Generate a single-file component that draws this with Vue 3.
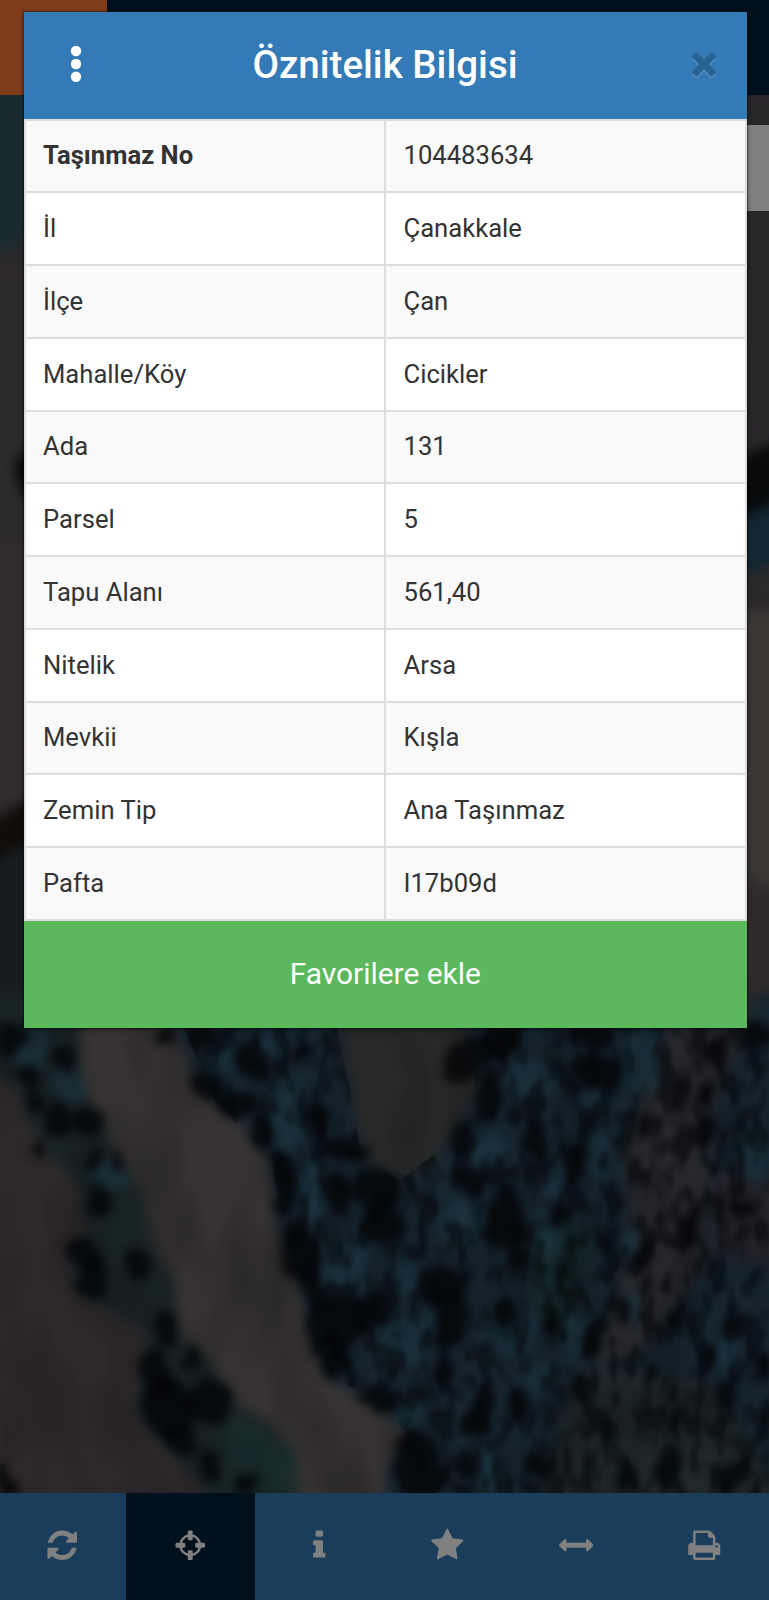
<script setup>
const rows = [
  ['Taşınmaz No', '104483634'],
  ['İl', 'Çanakkale'],
  ['İlçe', 'Çan'],
  ['Mahalle/Köy', 'Cicikler'],
  ['Ada', '131'],
  ['Parsel', '5'],
  ['Tapu Alanı', '561,40'],
  ['Nitelik', 'Arsa'],
  ['Mevkii', 'Kışla'],
  ['Zemin Tip', 'Ana Taşınmaz'],
  ['Pafta', 'I17b09d'],
]

const tools = [
  { name: 'refresh', path: 'M1639 1056q0 5-1 7-64 268-268 434.5t-478 166.5q-146 0-282.5-55t-243.5-157l-129 129q-19 19-45 19t-45-19-19-45v-448q0-26 19-45t45-19h448q26 0 45 19t19 45-19 45l-137 137q71 66 161 102t187 36q134 0 250-65t186-179q11-17 53-117 8-23 30-23h192q13 0 22.5 9.5t9.5 22.5zm25-800v448q0 26-19 45t-45 19h-448q-26 0-45-19t-19-45 19-45l138-138q-148-137-349-137-134 0-250 65t-186 179q-11 17-53 117-8 23-30 23h-199q-13 0-22.5-9.5t-9.5-22.5v-7q65-268 270-434.5t480-166.5q146 0 284 55.5t245 156.5l130-129q19-19 45-19t45 19 19 45z' },
  { name: 'locate', active: true, path: 'M1325 1024h-109q-26 0-45-19t-19-45v-128q0-26 19-45t45-19h109q-32-108-112.5-188.5t-188.5-112.5v109q0 26-19 45t-45 19h-128q-26 0-45-19t-19-45v-109q-108 32-188.5 112.5t-112.5 188.5h109q26 0 45 19t19 45v128q0 26-19 45t-45 19h-109q32 108 112.5 188.5t188.5 112.5v-109q0-26 19-45t45-19h128q26 0 45 19t19 45v109q108-32 188.5-112.5t112.5-188.5zm339-192v128q0 26-19 45t-45 19h-143q-37 161-154.5 278.5t-278.5 154.5v143q0 26-19 45t-45 19h-128q-26 0-45-19t-19-45v-143q-161-37-278.5-154.5t-154.5-278.5h-143q-26 0-45-19t-19-45v-128q0-26 19-45t45-19h143q37-161 154.5-278.5t278.5-154.5v-143q0-26 19-45t45-19h128q26 0 45 19t19 45v143q161 37 278.5 154.5t154.5 278.5h143q26 0 45 19t19 45z' },
  { name: 'info', path: 'M1216 1344v128q0 26-19 45t-45 19h-512q-26 0-45-19t-19-45v-128q0-26 19-45t45-19h64v-384h-64q-26 0-45-19t-19-45v-128q0-26 19-45t45-19h384q26 0 45 19t19 45v576h64q26 0 45 19t19 45zm-128-1152v192q0 26-19 45t-45 19h-256q-26 0-45-19t-19-45v-192q0-26 19-45t45-19h256q26 0 45 19t19 45z' },
  { name: 'favourites', path: 'M1728 647q0 22-26 48l-363 354 86 500q1 7 1 20 0 21-10.5 35.5t-30.5 14.5q-19 0-40-12l-449-236-449 236q-22 12-40 12-21 0-31.5-14.5t-10.5-35.5q0-6 2-20l86-500-364-354q-25-27-25-48 0-37 56-46l502-73 225-455q19-41 49-41t49 41l225 455 502 73q56 9 56 46z' },
  { name: 'measure', path: 'M1792 896q0 26-19 45l-256 256q-19 19-45 19t-45-19-19-45v-128h-1024v128q0 26-19 45t-45 19-45-19l-256-256q-19-19-19-45t19-45l256-256q19-19 45-19t45 19 19 45v128h1024v-128q0-26 19-45t45-19 45 19l256 256q19 19 19 45z' },
  { name: 'print', path: 'M448 1536h896v-256h-896v256zm0-640h896v-384h-160q-40 0-68-28t-28-68v-160h-640v640zm1152 64q0-26-19-45t-45-19-45 19-19 45 19 45 45 19 45-19 19-45zm128 0v416q0 13-9.5 22.5t-22.5 9.5h-224v160q0 40-28 68t-68 28h-960q-40 0-68-28t-28-68v-160h-224q-13 0-22.5-9.5t-9.5-22.5v-416q0-79 56.5-135.5t135.5-56.5h64v-544q0-40 28-68t68-28h672q40 0 88 20t76 48l152 152q28 28 48 76t20 88v256h64q79 0 135.5 56.5t56.5 135.5z' },
]

// Tree shadows in terrain units: cx, cy, rx, ry
const shadows = [
  [20, 60, 30, 60], [130, 120, 25, 40], [60, 170, 30, 30], [75, 240, 15, 40], [120, 300, 28, 50], [180, 300, 32, 40],
  [75, 390, 12, 35], [185, 420, 16, 28], [235, 420, 14, 28], [200, 540, 28, 60], [175, 700, 38, 50], [190, 780, 40, 55],
  [280, 730, 26, 50], [340, 930, 22, 60], [390, 1010, 22, 35], [320, 1060, 30, 80], [340, 1150, 55, 90],
  [430, 1150, 50, 70], [370, 1260, 35, 55], [430, 1340, 18, 50], [500, 1395, 25, 30], [10, 1390, 22, 60],
  [340, 45, 22, 30], [420, 50, 32, 40], [425, 190, 33, 50], [480, 250, 45, 40], [520, 130, 30, 60], [620, 100, 20, 28],
  [530, 350, 24, 42], [650, 300, 25, 45], [580, 480, 20, 90], [575, 560, 18, 40], [710, 395, 42, 28],
  [690, 520, 28, 60], [770, 510, 48, 60], [780, 610, 45, 60], [615, 700, 40, 80], [635, 810, 26, 60],
  [690, 900, 65, 80], [680, 1010, 42, 60], [760, 860, 36, 50], [775, 1130, 42, 42], [840, 700, 22, 25],
  [850, 1340, 52, 100], [900, 800, 38, 60], [920, 920, 30, 80], [900, 1045, 20, 50], [950, 120, 45, 75],
  [1020, 60, 38, 50], [1000, 220, 22, 80], [940, 350, 20, 50], [960, 480, 28, 45], [1030, 590, 42, 95],
  [1060, 720, 18, 40], [1090, 370, 28, 60], [1170, 430, 25, 60], [1190, 320, 18, 60], [1220, 150, 48, 60],
  [1210, 40, 38, 40], [1380, 210, 14, 60], [1440, 230, 14, 50], [1465, 90, 20, 45], [1310, 320, 22, 38],
  [1440, 340, 14, 60], [1310, 700, 15, 42], [1245, 670, 18, 55], [1210, 960, 18, 50], [1130, 900, 20, 45],
  [1030, 880, 22, 45], [1330, 1050, 18, 28], [1380, 880, 14, 55], [1490, 920, 14, 48], [1520, 300, 14, 28],
  [1510, 565, 28, 24], [1405, 620, 12, 80], [1375, 1190, 18, 55], [1480, 1130, 20, 55], [1500, 1360, 22, 60],
  [1360, 1330, 20, 60], [1560, 1220, 18, 50], [1275, 1380, 16, 40], [1100, 1340, 28, 38], [990, 1130, 20, 55],
  [1060, 1150, 16, 48], [970, 1210, 28, 42], [950, 1330, 22, 48], [1270, 880, 14, 48], [1160, 740, 14, 55],
  [1140, 590, 18, 38], [1540, 40, 28, 36], [1180, 1100, 16, 48], [1240, 1230, 14, 45], [1430, 740, 16, 34],
  [1120, 1180, 13, 42], [1450, 1010, 12, 34], [1550, 1040, 14, 42],
]

// Sunlit crowns: cx, cy, rx, ry
const crowns = [
  [590, 290, 45, 110], [470, 110, 25, 55], [560, 60, 40, 50], [640, 510, 28, 90], [690, 790, 40, 60],
  [730, 700, 20, 70], [940, 620, 60, 60], [830, 780, 30, 50], [820, 960, 45, 80], [880, 920, 16, 60],
  [1080, 180, 60, 60], [1310, 130, 40, 90], [1215, 240, 25, 28], [1220, 400, 25, 70], [1110, 640, 30, 70],
  [1130, 480, 25, 60], [1000, 400, 35, 50], [1290, 660, 14, 60], [1540, 400, 26, 90], [1480, 1000, 18, 70],
  [840, 1180, 40, 50], [1000, 1350, 30, 60], [1060, 950, 40, 60], [1100, 1080, 40, 60], [1180, 940, 22, 70],
  [1290, 860, 20, 60], [70, 80, 28, 80], [140, 190, 30, 60], [220, 470, 35, 45],
]
</script>

<template>
  <div class="page">
    <svg class="map" viewBox="0 0 769 1600" aria-hidden="true">
      <defs>
        <filter id="soft" x="-10%" y="-10%" width="120%" height="120%" color-interpolation-filters="sRGB"><feGaussianBlur stdDeviation="6" /></filter>
        <filter id="ground" x="-10%" y="-10%" width="120%" height="120%" color-interpolation-filters="sRGB"><feGaussianBlur stdDeviation="12 16" /></filter>
        <filter id="leaf" x="-10%" y="-10%" width="120%" height="120%" color-interpolation-filters="sRGB">
          <feTurbulence type="fractalNoise" baseFrequency="0.02 0.014" numOctaves="2" seed="3" result="n" />
          <feDisplacementMap in="SourceGraphic" in2="n" scale="50" xChannelSelector="R" yChannelSelector="G" />
          <feGaussianBlur stdDeviation="10 15" />
        </filter>
        <filter id="canopy" x="0" y="0" width="100%" height="100%" color-interpolation-filters="sRGB">
          <feTurbulence type="fractalNoise" baseFrequency="0.055 0.032" numOctaves="2" seed="8" />
          <feColorMatrix values="0 0 0 0 0.01  0 0 0 0 0.02  0 0 0 0 0.03  4 0 0 0 -1.7" />
          <feGaussianBlur stdDeviation="1.5" />
        </filter>
        <filter id="grain" x="0" y="0" width="100%" height="100%" color-interpolation-filters="sRGB">
          <feTurbulence type="fractalNoise" baseFrequency="0.02 0.009" numOctaves="2" seed="21" />
          <feColorMatrix values="0 0 0 0 0.04  0 0 0 0 0.04  0 0 0 0 0.05  2 0 0 0 -0.8" />
          <feGaussianBlur stdDeviation="2" />
        </filter>
        <clipPath id="woods">
          <path d="M180 1020H335L350 1090L362 1160L400 1180L440 1150L475 1090V1020H769V1500H400L405 1430L365 1395L330 1375L305 1290L282 1230L272 1160L215 1100Z" />
        </clipPath>
      </defs>
      <rect width="769" height="1600" fill="#2c292b" />
      <g filter="url(#soft)">
        <path d="M-20 75H50V220L15 250L-20 245Z" fill="#192a2d" />
        <path d="M-20 270H50V850H-20Z" fill="#2d2a2c" />
        <path d="M-20 550H50V800H-20Z" fill="#332c2c" />
        <path d="M14 465L40 435V515L20 488Z" fill="#080607" />
        <path d="M-20 830L50 785V840L-20 870Z" fill="#120d0b" />
        <path d="M-20 870L50 830V1040H-20Z" fill="#171c20" />
        <path d="M735 90H790V440H735Z" fill="#29262a" />
        <path d="M735 460L790 435V500L735 520Z" fill="#080a0b" />
        <path d="M735 520L790 495V555L735 580Z" fill="#132632" />
        <path d="M735 610H790V890H735Z" fill="#393634" />
        <path d="M735 870L790 900V1020H735Z" fill="#302a2b" />
      </g>

      <g transform="translate(0 1020) scale(.4904 .3333)">
        <g filter="url(#ground)">
          <path d="M-80 -80H1650V1520H-80Z" fill="#2d292b" />
          <path d="M-80 400L100 440L160 680L140 820L280 1000L270 1200L420 1400V1520H-80Z" fill="#2e292b" />
          <path d="M160 -80H350L400 190L500 320L550 420L560 580L600 760L640 960L670 1080L740 1130L830 1230L790 1340V1520H600L590 1300L480 1140L400 990L360 900L330 690L280 500L210 330L165 200Z" fill="#363332" />
          <path d="M330 -80H1650V1520H780L790 1340L840 1240L740 1130L670 1080L640 960L600 760L560 580L550 420L500 320L400 190Z" fill="#172630" />
          <path d="M-80 -80H165L165 200L215 330L240 420L290 520L310 680L355 780L365 950L420 1010L480 1150L540 1200L600 1300L620 1520H480L350 1300L280 1180L300 930L160 820L135 700L180 640L165 500L110 420L60 300L40 200L-80 130Z" fill="#192426" />
          <path d="M680 -80H930L980 200L930 330L880 430L820 480L750 430L730 330L710 150Z" fill="#282828" />
          <path d="M1390 -80H1550L1450 300L1440 740L1300 1020L1200 1030L1290 700L1270 380Z" fill="#27282b" />
          <path d="M1450 450L1650 480V760L1450 700Z" fill="#24242b" />
          <path d="M1180 1050L1450 1080L1600 1440H1100Z" fill="#202829" />
          <path d="M1070 580L1230 620L1150 1000L1080 850Z" fill="#16282b" />
          <path d="M460 1180L600 1280L610 1440H450Z" fill="#1a2b2c" />
        </g>
        <g filter="url(#leaf)">
          <ellipse v-for="(s, i) in crowns" :key="i" :cx="s[0]" :cy="s[1]" :rx="s[2]" :ry="s[3]" fill="#1d3945" opacity=".65" />
        </g>
      </g>
      <g clip-path="url(#woods)">
        <rect class="noise" x="180" y="1020" width="589" height="480" filter="url(#canopy)" />
      </g>
      <rect x="0" y="1020" width="769" height="480" filter="url(#grain)" opacity=".3" />
      <g transform="translate(0 1020) scale(.4904 .3333)" filter="url(#leaf)">
        <ellipse v-for="(s, i) in shadows" :key="i" :cx="s[0]" :cy="s[1]" :rx="s[2]" :ry="s[3]"
          :transform="`rotate(${s[0] > 860 ? 8 : -6} ${s[0]} ${s[1]})`" fill="#040507" opacity=".82" />
      </g>
    </svg>

    <header class="topbar"><div class="brand"></div></header>
    <div class="side-tab"></div>

    <section class="dialog">
      <div class="head">
        <svg class="dots" viewBox="0 0 12 38" width="12" height="38">
          <circle cx="6" cy="6" r="5.2" /><circle cx="6" cy="19" r="5.2" /><circle cx="6" cy="31.8" r="5.2" />
        </svg>
        <h1>Öznitelik Bilgisi</h1>
        <svg class="close" viewBox="0 0 28 30" width="28" height="30">
          <path d="M1.500 6L6.500 1L14 8.500L21.500 1L26.500 6L19 13.500L26.500 21L21.500 26L14 18.500L6.500 26L1.500 21L9 13.500Z" class="glow" transform="translate(0 2)" />
          <path d="M1.500 6L6.500 1L14 8.500L21.500 1L26.500 6L19 13.500L26.500 21L21.500 26L14 18.500L6.500 26L1.500 21L9 13.500Z" />
        </svg>
      </div>
      <div class="table">
        <div v-for="(row, i) in rows" :key="row[0]" class="row">
          <div class="cell" :class="{ strong: i === 0 }">{{ row[0] }}</div>
          <div class="cell">{{ row[1] }}</div>
        </div>
      </div>
      <button class="add">Favorilere ekle</button>
    </section>

    <nav class="toolbar">
      <div v-for="t in tools" :key="t.name" class="tool" :class="{ active: t.active }">
        <svg viewBox="0 0 1792 1792" width="34.500" height="34.500"><path :d="t.path" /></svg>
      </div>
    </nav>
  </div>
</template>

<style>
body { margin: 0; background: #1c1e20; }
</style>

<style scoped>
.page {
  position: relative;
  width: 769px;
  height: 1600px;
  overflow: hidden;
  display: flex;
  flex-direction: column;
  justify-content: flex-end;
  font-family: Roboto, "Liberation Sans", sans-serif;
  color: #333;
}
.map { position: absolute; inset: 0; width: 769px; height: 1600px; }
.noise { opacity: .55; }
.topbar { position: absolute; top: 0; left: 0; width: 100%; height: 95px; background: #00111d; }
.brand { width: 107px; height: 95px; background: #803b1b; }
.side-tab { position: absolute; top: 125px; right: 0; width: 40px; height: 86px; background: #808080; }
.dialog {
  position: absolute;
  top: 11.500px;
  left: 23.500px;
  width: 723.500px;
  box-shadow: 0 0 0 1.500px rgba(0, 0, 0, .25), 0 2px 5px rgba(0, 0, 0, .35);
}
.head {
  height: 107px;
  box-sizing: border-box;
  display: flex;
  align-items: center;
  justify-content: space-between;
  padding: 0 29px 2px 46px;
  background: #337ab7;
}
.dots { fill: #fff; }
.head h1 { margin: 1px 0 0 -1.500px; font-size: 38.500px; line-height: 54px; font-weight: 500; color: #fff; white-space: nowrap; }
.close { fill: #296292; margin-top: 4px; }
.close .glow { fill: #5590c2; }
.table { border-top: 2px solid #ddd; border-left: 2px solid #ddd; background: #fff; }
.row { display: grid; grid-template-columns: 360.500px 1fr; height: 72.750px; }
.row:nth-child(odd) { background: #f9f9f9; }
.cell {
  box-sizing: border-box;
  display: flex;
  align-items: center;
  padding: 0 0 1px 17.500px;
  border-right: 2px solid #ddd;
  border-bottom: 2px solid #ddd;
  font-size: 25.630px;
  white-space: nowrap;
}
.strong { font-weight: 700; }
.add {
  display: block;
  width: 100%;
  height: 107px;
  padding: 0 0 2px;
  border: 0;
  background: #5cb85c;
  color: #fff;
  font: 400 29.900px Roboto, sans-serif;
}
.toolbar {
  position: relative;
  display: grid;
  grid-template-columns: repeat(6, 1fr);
  width: 771px;
  height: 107px;
  margin-left: -2.500px;
  border-right: 1px solid #1a3d5c;
  background: #1a3d5c;
}
.tool { display: flex; align-items: center; justify-content: center; padding-bottom: 2px; fill: #808080; }
.active { background: #00111d; }
</style>
